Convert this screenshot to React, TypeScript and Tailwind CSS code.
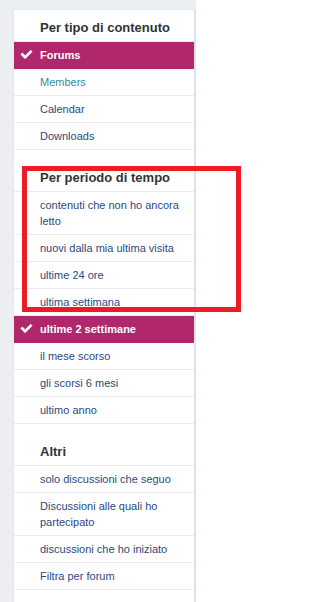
import React from "react";

type Item = {
  label: string;
  active?: boolean;
  visited?: boolean;
};

type Section = {
  title: string;
  items: Item[];
};

const sections: Section[] = [
  {
    title: "Per tipo di contenuto",
    items: [
      { label: "Forums", active: true },
      { label: "Members", visited: true },
      { label: "Calendar" },
      { label: "Downloads" },
    ],
  },
  {
    title: "Per periodo di tempo",
    items: [
      { label: "contenuti che non ho ancora letto" },
      { label: "nuovi dalla mia ultima visita" },
      { label: "ultime 24 ore" },
      { label: "ultima settimana" },
      { label: "ultime 2 settimane", active: true },
      { label: "il mese scorso" },
      { label: "gli scorsi 6 mesi" },
      { label: "ultimo anno" },
    ],
  },
  {
    title: "Altri",
    items: [
      { label: "solo discussioni che seguo" },
      { label: "Discussioni alle quali ho partecipato" },
      { label: "discussioni che ho iniziato" },
      { label: "Filtra per forum" },
    ],
  },
];

function Check() {
  return (
    <svg
      viewBox="0 0 512 512"
      className="absolute left-[6px] top-[7px] w-[13px] h-[11px] fill-white stroke-white"
      strokeWidth={30}
      strokeLinejoin="round"
    >
      <path d="M173.9 439.4 7.5 273c-10-10-10-26.2 0-36.2l36.2-36.2c10-10 26.2-10 36.2 0L192 312.7 432.1 72.6c10-10 26.2-10 36.2 0l36.2 36.2c10 10 10 26.2 0 36.2L210.1 439.4c-10 10-26.2 10-36.2 0z" />
    </svg>
  );
}

function MenuItem({ item }: { item: Item }) {
  if (item.active) {
    return (
      <li className="relative bg-[#b0276b] border-b border-[#b0276b] pl-[26px] pr-3 py-[5px] leading-[16px] text-[11px] font-bold text-white">
        <Check />
        {item.label}
      </li>
    );
  }
  return (
    <li
      className={`border-b border-[#e8ebf0] pl-[26px] pr-3 py-[5px] leading-[16px] text-[11px] ${
        item.visited ? "text-[#3a8a9b]" : "text-[#2b4a7d]"
      }`}
    >
      {item.label}
    </li>
  );
}

export default function App() {
  return (
    <div
      className="relative h-[602px] bg-white overflow-hidden"
      style={{ fontFamily: '"Liberation Sans", Arial, sans-serif' }}
    >
      <div className="w-[196px] h-full bg-[#ebeff2] pt-[9px] pl-[13px]">
        <div className="h-full bg-white border-t border-l border-[#e3e7ec] border-r-2 border-r-[#dce3ee]">
          {sections.map((section, i) => (
            <div key={section.title} className={i > 0 ? "mt-[10px]" : ""}>
              <h3 className="border-b border-[#e8ebf0] pl-[26px] pt-[9px] pb-[4px] leading-[18px] text-[13px] font-bold text-[#333333]">
                {section.title}
              </h3>
              <ul>
                {section.items.map((item) => (
                  <MenuItem key={item.label} item={item} />
                ))}
              </ul>
            </div>
          ))}
        </div>
      </div>

      {/* annotation box drawn over the screenshot */}
      <div className="absolute left-[22px] top-[166px] w-[219px] h-[146px] border-[5px] border-[#ed1c24] pointer-events-none" />
    </div>
  );
}
